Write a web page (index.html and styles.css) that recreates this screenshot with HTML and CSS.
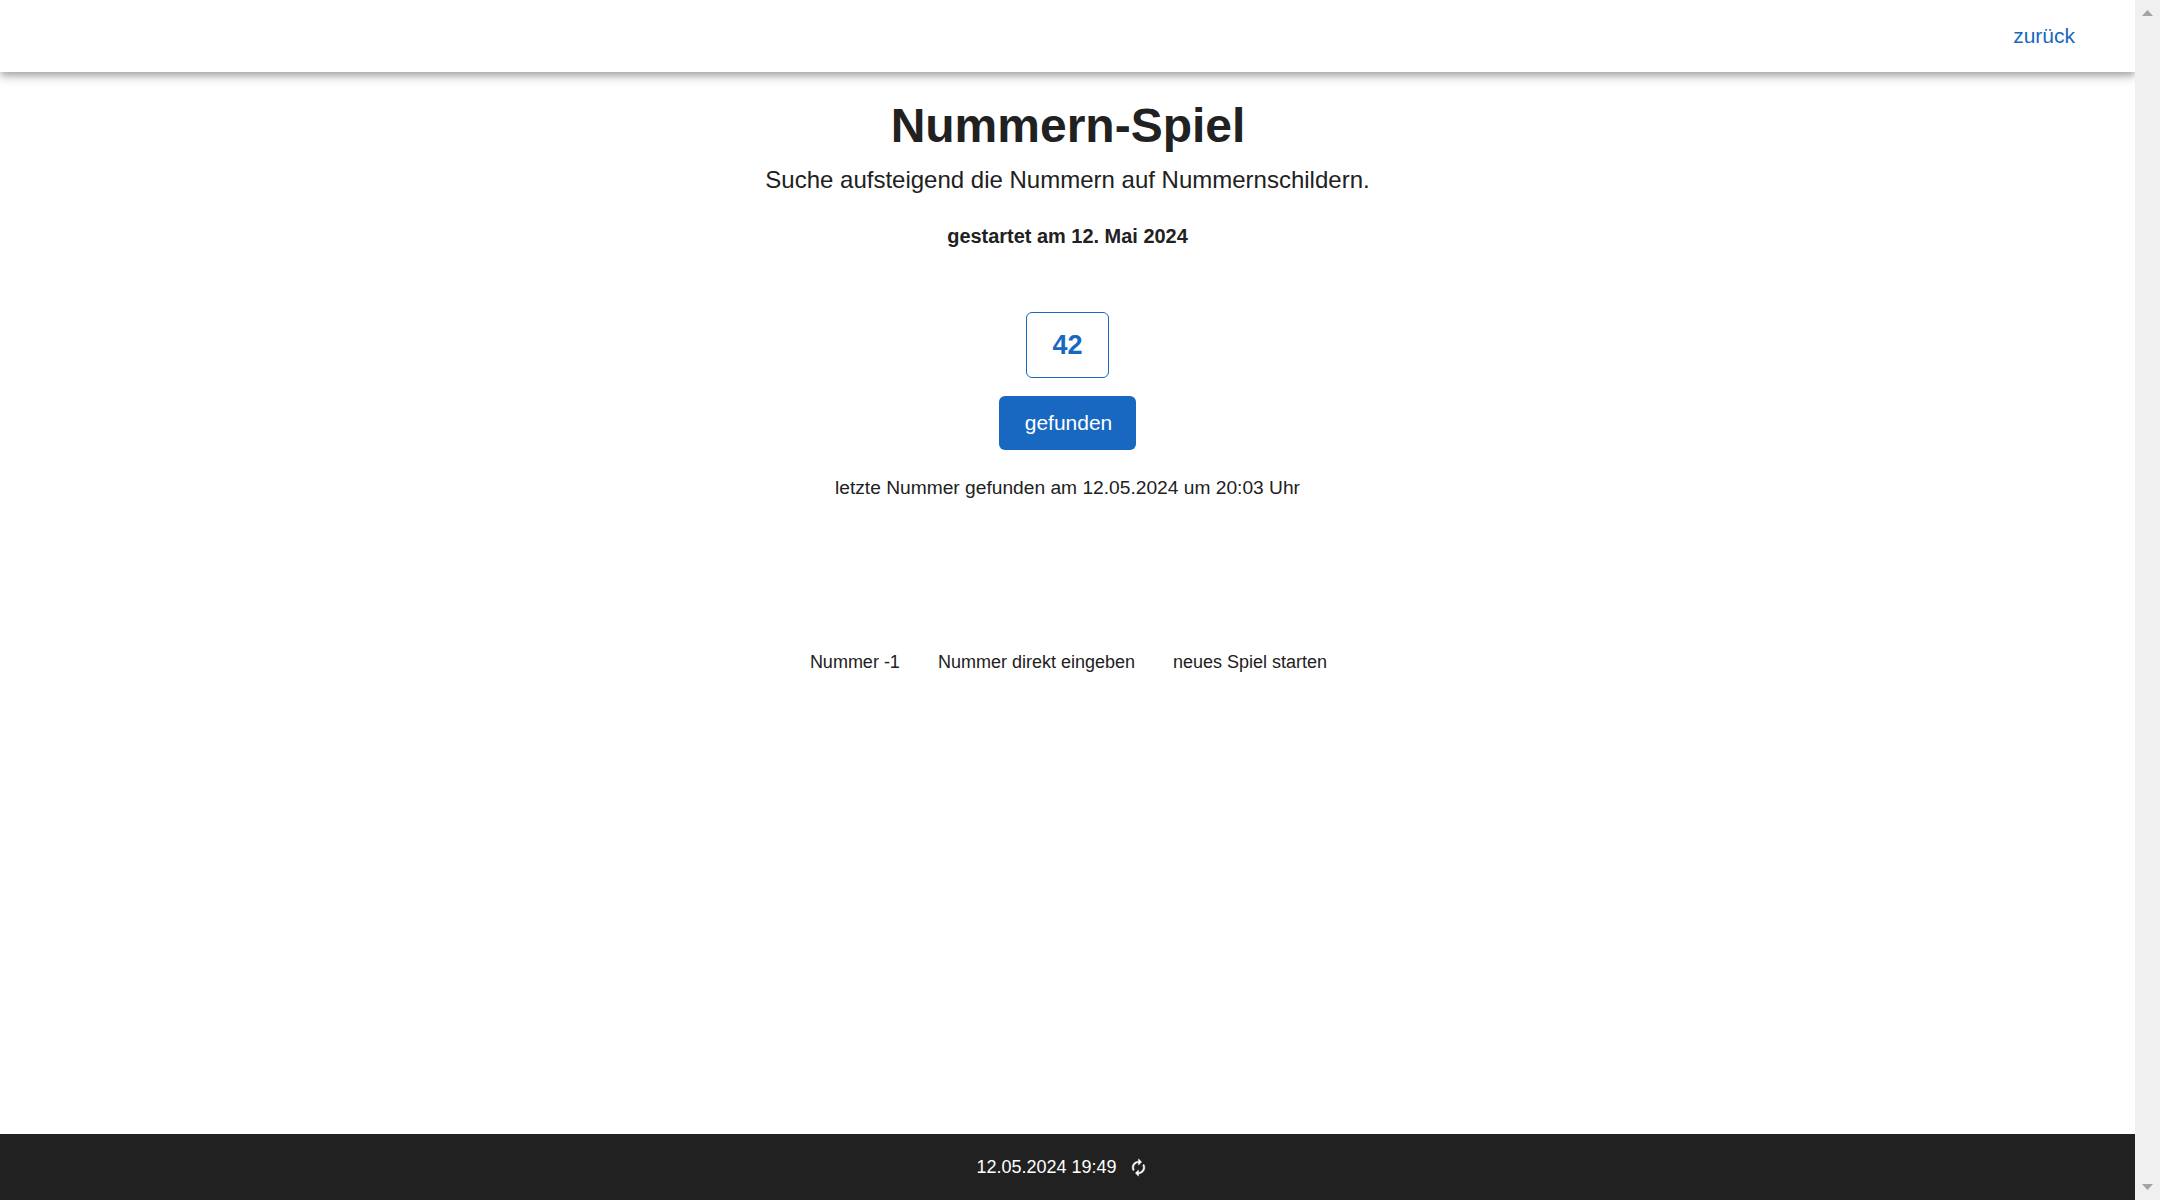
FILE: index.html
```html
<!DOCTYPE html>
<html lang="de">
<head>
<meta charset="utf-8">
<title>Nummern-Spiel</title>
<link rel="stylesheet" href="styles.css">
</head>
<body>
<div class="page">
  <header class="topbar"><a class="back">zurück</a></header>
  <main class="game">
    <h1 class="title">Nummern-Spiel</h1>
    <p class="subtitle">Suche aufsteigend die Nummern auf Nummernschildern.</p>
    <p class="started">gestartet am 12. Mai 2024</p>
    <div class="number">42</div>
    <button class="found">gefunden</button>
    <p class="last">letzte Nummer gefunden am 12.05.2024 um 20:03 Uhr</p>
    <nav class="actions">
      <a>Nummer -1</a>
      <a>Nummer direkt eingeben</a>
      <a>neues Spiel starten</a>
    </nav>
  </main>
  <footer class="footer">
    <span>12.05.2024 19:49</span>
    <svg class="reload" viewBox="0 0 24 24"><path d="M12 6v3l4-4-4-4v3c-4.42 0-8 3.58-8 8 0 1.57.46 3.03 1.24 4.26L6.7 14.8c-.45-.83-.7-1.79-.7-2.8 0-3.31 2.69-6 6-6zm6.76 1.74L17.3 9.2c.44.84.7 1.79.7 2.8 0 3.31-2.69 6-6 6v-3l-4 4 4 4v-3c4.42 0 8-3.58 8-8 0-1.57-.46-3.03-1.24-4.26z"/></svg>
  </footer>
</div>
<div class="scrollbar">
  <svg class="arrow" viewBox="0 0 11 6"><path d="M0 6 5.5 0 11 6z"/></svg>
  <svg class="arrow" viewBox="0 0 11 6"><path d="M0 0 5.5 6 11 0z"/></svg>
</div>
</body>
</html>
```
FILE: styles.css
```css
* { box-sizing: border-box; }

body {
  margin: 0;
  height: 100vh;
  display: flex;
  overflow: hidden;
  background: #fff;
  color: #212121;
  font-family: Arial, "Liberation Sans", sans-serif;
}

.page {
  flex: 1;
  display: flex;
  flex-direction: column;
  overflow: hidden;
}

.topbar {
  height: 72px;
  flex: none;
  display: flex;
  align-items: center;
  justify-content: flex-end;
  padding-right: 60px;
  box-shadow:
    0 3px 6px -1.5px rgba(0, 0, 0, 0.2),
    0 6px 7.5px 0 rgba(0, 0, 0, 0.14),
    0 1.5px 15px 0 rgba(0, 0, 0, 0.12);
}

.back {
  color: #1867c0;
  font-size: 21px;
  line-height: 30px;
}

.game {
  flex: 1;
  display: flex;
  flex-direction: column;
  align-items: center;
  padding-top: 24px;
}

.title {
  margin: 0;
  padding-left: 1px;
  font-size: 48px;
  line-height: 60px;
}

.subtitle {
  margin: 6px 0 0;
  font-size: 24px;
  line-height: 36px;
}

.started {
  margin: 23px 0 0;
  font-size: 19.95px;
  font-weight: bold;
  line-height: 30px;
}

.number {
  width: 83px;
  height: 66px;
  margin-top: 61px;
  border: 1px solid #1867c0;
  border-radius: 6px;
  color: #1867c0;
  font-size: 27px;
  font-weight: bold;
  line-height: 64px;
  text-align: center;
}

.found {
  width: 137px;
  height: 54px;
  margin-top: 18px;
  padding: 0 0 0 2px;
  border: 0;
  border-radius: 6px;
  background: #1867c0;
  color: #fff;
  font: 21px/54px Arial, "Liberation Sans", sans-serif;
}

.last {
  margin: 23px 0 0;
  font-size: 19.2px;
  line-height: 30px;
}

.actions {
  display: flex;
  gap: 38px;
  margin-top: 145px;
  padding-left: 2px;
  font-size: 18px;
  line-height: 28px;
}

.footer {
  height: 66px;
  flex: none;
  display: flex;
  align-items: center;
  justify-content: center;
  gap: 12px;
  padding-right: 11px;
  background: #212121;
  color: #fff;
  font-size: 18px;
}

.reload {
  width: 19px;
  height: 19px;
  fill: currentColor;
  stroke: currentColor;
  stroke-width: 0.5;
}

.scrollbar {
  width: 25px;
  display: flex;
  flex-direction: column;
  align-items: center;
  justify-content: space-between;
  padding: 10px 0;
  background: #f0f0f0;
}

.arrow {
  width: 11px;
  height: 6px;
  fill: #a3a3a3;
}
```
